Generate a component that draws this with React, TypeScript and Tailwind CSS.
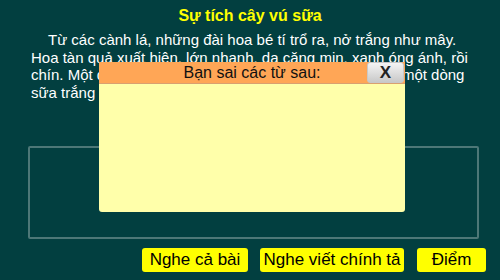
export default function App() {
  return (
    <div
      className="relative h-[280px] w-[500px] overflow-hidden bg-[#023f40]"
      style={{ fontFamily: '"Liberation Sans", Arial, sans-serif' }}
    >
      <h1 className="pt-[6px] text-center text-[16px] leading-[20px] font-bold text-[#ffff00]">
        Sự tích cây vú sữa
      </h1>

      <p className="mt-[5px] ml-[31px] w-[445px] indent-[17px] text-[15px] leading-[17.5px] text-white">
        Từ các cành lá, những đài hoa bé tí trổ ra, nở trắng như mây. Hoa tàn quả xuất hiện, lớn
        nhanh, da căng mịn, xanh óng ánh, rồi chín. Một quả rơi vào lòng cậu. Môi cậu vừa chạm vào,
        một dòng sữa trắng trào ra, ngọt thơm như sữa mẹ.
      </p>

      <div className="mt-[45px] ml-[28px] h-[93px] w-[451px] rounded-[2px] border-2 border-[#4d7777]" />

      <div className="mt-[9px] mr-[14px] flex justify-end gap-[12px] text-[17px] leading-[24px] text-black">
        <button className="h-[24px] w-[106px] rounded-[3px] bg-[#ffff00]">Nghe cả bài</button>
        <button className="h-[24px] w-[144px] rounded-[3px] bg-[#ffff00]">Nghe viết chính tả</button>
        <button className="ml-px h-[24px] w-[69px] rounded-[3px] bg-[#ffff00]">Điểm</button>
      </div>

      {/* popup */}
      <div className="absolute top-[62px] left-[99px] w-[306px] overflow-hidden rounded-b-[3px]">
        <div className="relative h-[22px] border-b border-[#d9a070] bg-[#ffa656] text-center text-[16px] leading-[21px] text-[#111]">
          Bạn sai các từ sau:
          <button className="absolute top-0 right-[1px] h-[21px] w-[37px] rounded-[3px] border border-[#c8c8c8] bg-gradient-to-b from-[#f4f4f4] to-[#c9c9c9] text-[17px] leading-[18px] font-bold text-[#222]">
            X
          </button>
        </div>
        <div className="h-[128px] bg-[#ffffaa]" />
      </div>
    </div>
  );
}
